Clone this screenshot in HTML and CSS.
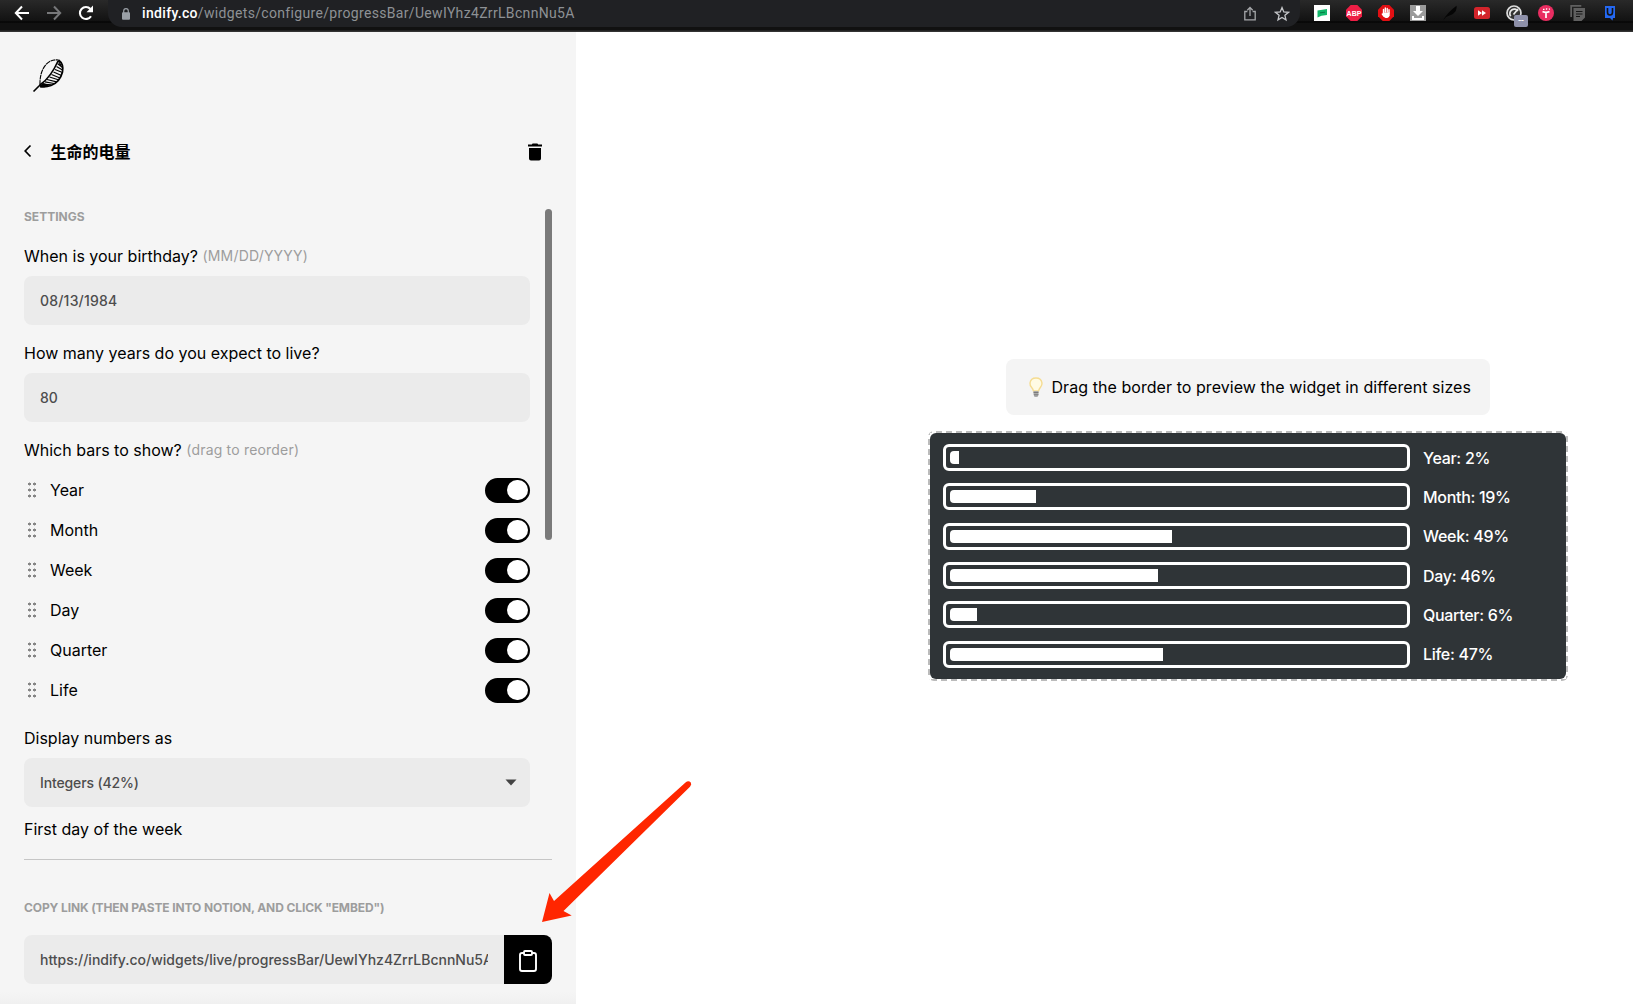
FILE: index.html
```html
<!DOCTYPE html>
<html lang="en">
<head>
<meta charset="utf-8">
<title>indify</title>
<link rel="stylesheet" href="styles.css">
</head>
<body>
<header class="toolbar">
  <nav class="nav">
    <svg width="16" height="16" viewBox="0 0 16 16" fill="none" stroke="#fff" stroke-width="2"><path d="M15 8H2M8 1.500L1.800 8L8 14.500"/></svg>
    <svg width="16" height="16" viewBox="0 0 16 16" fill="none" stroke="#77787a" stroke-width="2"><path d="M1 8h13M8 1.500L14.200 8L8 14.500"/></svg>
    <svg width="16" height="16" viewBox="0 0 16 16"><path d="M13 11.200A6 6 0 1 1 12.400 4" fill="none" stroke="#fff" stroke-width="2.100"/><path d="M15 .500v6.800H8.500z" fill="#fff"/></svg>
  </nav>
  <div class="address">
    <svg class="lock" width="10" height="12" viewBox="0 0 10 12"><rect x="1" y="4.300" width="8" height="7.400" rx="1" fill="#9aa0a6"/><path d="M2.700 5V3a2.300 2.300 0 0 1 4.600 0v2" fill="none" stroke="#9aa0a6" stroke-width="1.200"/></svg>
    <span class="url"><b>indify.co</b>/widgets/configure/progressBar/UewIYhz4ZrrLBcnnNu5A</span>
    <svg class="share" width="14" height="16" viewBox="0 0 14 16" fill="none" stroke="#a5a7aa" stroke-width="1.300"><path d="M4.400 5.500H1.800v8.400h10.400V5.500H9.600M7 10V1.600M4.300 4.200L7 1.500l2.700 2.700"/></svg>
    <svg class="star" width="16" height="16" viewBox="0 0 16 16" fill="none" stroke="#c4c6c9" stroke-width="1.300"><path d="M8 1.600l1.800 4.300 4.700.4-3.600 3 1.100 4.600L8 11.500l-4 2.400 1.100-4.600-3.600-3 4.700-.4z"/></svg>
  </div>
  <div class="extensions">
    <svg width="16" height="16" viewBox="0 0 16 16"><path fill="#fff" d="M0 0h16v16H0z"/><path fill="#12b76a" d="M3.500 5.500L13 4v6l-5.500.8-4 1.600z"/><path stroke="#087a45" d="M6 7.800l5-.6"/></svg>
    <svg width="16" height="16" viewBox="0 0 16 16"><path fill="#ed1e45" d="M4.700 0h6.600L16 4.700v6.600L11.300 16H4.700L0 11.300V4.700z"/><text class="abp" x="8" y="10.500" text-anchor="middle">ABP</text></svg>
    <svg width="16" height="16" viewBox="0 0 16 16"><path fill="#e20f13" d="M4.700 0h6.600L16 4.700v6.600L11.300 16H4.700L0 11.300V4.700z"/><path d="M5.500 8V4.500M7.300 7V3M9.200 7V3.400M11 8V4.800M4.300 9l1.500 2" stroke="#fff" stroke-width="1.400" stroke-linecap="round"/><path d="M4.900 7.500h6.800v2.800q-.5 2.700-2.400 2.700H7.500q-1.500 0-2.600-3z" fill="#fff"/></svg>
    <svg width="16" height="16" viewBox="0 0 16 16"><path fill="#9b9b9b" d="M0 0h16v16H0z"/><path fill="#fff" d="M6 1h4v5h3l-5 5-5-5h3zM2 11h2v2h8v-2h2v4H2z"/></svg>
    <svg width="16" height="16" viewBox="0 0 16 16"><path d="M1 15.500Q5 8 14.500.8 15.500 6 10 9.500L4 12z" fill="#050505"/></svg>
    <svg width="16" height="16" viewBox="0 0 16 16"><rect y="2" width="16" height="12" rx="2.500" fill="#d3242b"/><path d="M4 5.300L8 8l-4 2.700zM8 5.300L12 8l-4 2.700z" fill="#fff"/></svg>
    <span class="gauge">
      <svg width="16" height="16" viewBox="0 0 16 16"><circle cx="8" cy="8" r="7" fill="#333" stroke="#ddd" stroke-width="1.700"/><path d="M4.700 11.300A4.500 4.500 0 1 1 12 6M7.500 9.500L12 4" fill="none" stroke="#e8e8e8" stroke-width="1.700"/></svg>
      <span class="badge">--</span>
    </span>
    <svg width="16" height="16" viewBox="0 0 16 16"><circle cx="8" cy="8" r="8" fill="#e92d61"/><path d="M8 13V7.500M4.500 6.500q3.500 1.800 7 0" fill="none" stroke="#fff" stroke-width="1.700"/><path d="M5 4.300h1.500M8 4.500l1.200-1M11 4.500l.7-.8" stroke="#fff" stroke-width="1.200"/></svg>
    <svg width="16" height="16" viewBox="0 0 16 16"><path d="M.300 0h11v1.700H2V12H.300zM3.500 3H15v9.500L11.500 16h-8z" fill="#606060"/><path d="M6 6.500h6.500M6 9h6.500M6 11.500h4" stroke="#161616" stroke-width="1.200"/></svg>
    <svg width="16" height="16" viewBox="0 0 16 16"><path fill="#2468f2" d="M3 1h10v12h-2l-.5 2.500L8 13H3z"/><path d="M5.500 3v4.300q0 2.700 2.500 2.700t2.500-2.700V3" fill="none" stroke="#131313" stroke-width="1.600"/></svg>
  </div>
</header>
<main class="page">
  <aside class="sidebar">
    <svg class="logo" width="34" height="36" viewBox="0 0 34 36"><path d="M1.500 33.500Q6 29 8.500 26.500 19 19 26 3" fill="none" stroke="#000" stroke-width="1.600"/><path d="M8 27.500Q7.500 14 14 6.500 19 1 26.500 2" fill="none" stroke="#000" stroke-width="1.100" stroke-dasharray="5 .6"/><path d="M26.500 2Q32 6 30.500 14 28 24 19 27.500q-5 2-11 1.200" fill="none" stroke="#000" stroke-width="1.700"/><path d="M26 2.500l3 5M25.500 5.500l5 4M24.500 8.500l6 3.500M23 11.500l7.500 3M21.500 14l8 3.500M19.500 16.500L28 20M17.500 19L27 22M15 21.500l9.500 2.300M13 23.800l9 1.700M10 26l9.500.8" stroke="#000" stroke-width="1.250"/><path d="M7 28l4.500-3 6 2.200-5 2z"/></svg>
    <div class="heading">
      <svg class="back" width="8" height="14" viewBox="0 0 8 14" fill="none" stroke="#000" stroke-width="1.700"><path d="M6.500 1.500L1.200 7l5.300 5.500"/></svg>
      <h1>生命的电量</h1>
      <svg class="trash" width="14" height="18" viewBox="0 0 14 18"><path d="M0 1.600h3.800L4.600.6h4.800l.8 1H14v1.900H0zM1 5h12v10.400q0 2-2 2H3q-2 0-2-2z"/></svg>
    </div>
    <div class="settings">
      <div class="fields">
        <h2>SETTINGS</h2>
        <label class="label">When is your birthday? <small>(MM/DD/YYYY)</small></label>
        <div class="input date">08/13/1984</div>
        <label class="label next">How many years do you expect to live?</label>
        <div class="input">80</div>
        <label class="label next">Which bars to show? <small>(drag to reorder)</small></label>
        <ul class="bars">
          <li><i class="grip"></i>Year<span class="toggle"></span></li>
          <li><i class="grip"></i>Month<span class="toggle"></span></li>
          <li><i class="grip"></i>Week<span class="toggle"></span></li>
          <li><i class="grip"></i>Day<span class="toggle"></span></li>
          <li><i class="grip"></i>Quarter<span class="toggle"></span></li>
          <li><i class="grip"></i>Life<span class="toggle"></span></li>
        </ul>
        <label class="label next">Display numbers as</label>
        <div class="input select">Integers (42%)<svg width="12" height="7" viewBox="0 0 12 7"><path d="M.500.500h11L6 6.500z" fill="#444"/></svg></div>
        <label class="label first">First day of the week</label>
      </div>
      <div class="scrollbar"></div>
    </div>
    <section class="copy">
      <h2>COPY LINK (THEN PASTE INTO NOTION, AND CLICK "EMBED")</h2>
      <div class="link">
        <div class="link-box"><div class="link-text">https://indify.co/widgets/live/progressBar/UewIYhz4ZrrLBcnnNu5A</div></div>
        <button class="copy-button"><svg width="20" height="24" viewBox="0 0 20 24" fill="none" stroke="#fff" stroke-width="1.900"><path d="M6 4H4Q2 4 2 6v14q0 2 2 2h12q2 0 2-2V6q0-2-2-2h-2"/><rect x="6" y="2" width="8" height="4" rx="1"/></svg></button>
      </div>
    </section>
  </aside>
  <section class="preview">
    <div class="tip"><svg width="14" height="21" viewBox="0 0 14 21"><path d="M4.500 14Q4 12 2.500 10.300.8 8.300 1 6 1.700 1 7 1t6 5q.2 2.300-1.500 4.300Q10 12 9.500 14z" fill="#fffbe4" stroke="#f5dc91" stroke-width="1.400"/><path d="M4.500 14h5v3.500L8.500 20h-3l-1-2.500z" fill="#aaa"/><path d="M4.500 15.500h5M5 17.800h4.500" stroke="#666" stroke-width=".7"/></svg>Drag the border to preview the widget in different sizes</div>
    <div class="widget">
      <div class="rows">
        <div class="row"><div class="track"><div class="fill" style="width:2%"></div></div><span>Year: 2%</span></div>
        <div class="row"><div class="track"><div class="fill" style="width:19%"></div></div><span>Month: 19%</span></div>
        <div class="row"><div class="track"><div class="fill" style="width:49%"></div></div><span>Week: 49%</span></div>
        <div class="row"><div class="track"><div class="fill" style="width:46%"></div></div><span>Day: 46%</span></div>
        <div class="row"><div class="track"><div class="fill" style="width:6%"></div></div><span>Quarter: 6%</span></div>
        <div class="row"><div class="track"><div class="fill" style="width:47%"></div></div><span>Life: 47%</span></div>
      </div>
    </div>
  </section>
</main>
<svg class="pointer" width="152" height="144" viewBox="540 779 152 144"><path d="M542 922l7.500-29 4.500 8L685.500 782.500q3-2.500 5.300 0 1.200 1.800-.8 4.300L563.500 911l8.200 4.500z" fill="#ff2600"/></svg>
</body>
</html>
```
FILE: styles.css
```css
* { box-sizing: border-box; }
body { margin: 0; height: 1004px; overflow: hidden; background: #fff; color: #000; font: 16px/20px Inter, "Noto Sans CJK SC", sans-serif; }
h1, h2, ul { margin: 0; padding: 0; }
svg { display: block; flex: none; }

/* Browser toolbar */
.toolbar { height: 32px; display: flex; background: linear-gradient(#292929, #121212 21px, #000 22px, #111 23px, #111 30px, #333 31px); }
.nav { width: 108px; height: 27px; display: flex; gap: 16px; padding: 5px 0 0 14px; flex: none; }
.address { width: 1192px; height: 27px; display: flex; align-items: center; background: #202124; border-radius: 0 0 14px 14px; padding-left: 13px; flex: none; }
.url { margin-left: 11px; padding-bottom: 1px; font: 14px/20px Roboto, sans-serif; letter-spacing: .33px; color: #8e9195; flex: 1; white-space: nowrap; }
.url b { font-weight: 500; color: #fff; }
.share { margin-right: 17px; }
.star { margin-right: 10px; }
.extensions { display: flex; gap: 16px; padding: 5px 0 0 14px; }
.abp { font: 700 7px "Liberation Sans", sans-serif; fill: #fff; }
.gauge { position: relative; width: 16px; height: 16px; }
.badge { position: absolute; left: 8px; top: 10px; width: 14px; height: 12px; border-radius: 2px; background: #8e90a9; color: #fff; font: 10px/12px Roboto, sans-serif; text-align: center; }

/* Configuration sidebar */
.page { display: flex; height: 972px; }
.sidebar { width: 576px; flex: none; padding: 26px 24px 0; background: linear-gradient(#f5f5f5 960px, #f0f0f0 972px); display: flex; flex-direction: column; }
.logo { margin-left: 8px; }
.heading { height: 24px; margin-top: 46px; display: flex; align-items: center; }
.back { margin-bottom: 2px; }
.heading h1 { margin-left: 18.5px; font-size: 16px; font-weight: 700; line-height: 24px; }
.trash { margin-left: auto; margin-right: 10px; }
.settings { margin-top: 45px; height: 651px; display: flex; border-bottom: 1px solid #c6c6c6; }
.fields { width: 506px; }
h2 { font-size: 12px; line-height: 16px; font-weight: 700; color: #9d9d9d; white-space: nowrap; }
.settings h2 { margin-bottom: 21px; }
.scrollbar { width: 7px; height: 331px; margin-left: 15px; border-radius: 4px; background: #7a7a7a; }
.label { display: block; height: 20px; white-space: nowrap; }
.label small { color: #9d9d9d; font-size: 14px; line-height: 1; letter-spacing: .19px; vertical-align: 1px; }
.label.next { margin-top: 18px; }
.label.first { margin-top: 12px; }
.input { height: 49px; margin-top: 10px; padding: 0 16px; display: flex; align-items: center; border-radius: 8px; background: #ebebeb; color: #4d4d4d; font-size: 14px; font-weight: 500; }
.date { letter-spacing: .2px; }
.select { justify-content: space-between; padding-right: 13px; letter-spacing: -.14px; }
.bars { list-style: none; margin-top: 10px; }
.bars li { height: 40px; display: flex; align-items: center; }
.grip { width: 10px; height: 18px; margin: 0 13px 0 3px; background: radial-gradient(circle, #858585 1.3px, transparent 1.7px) 0 0 / 5px 6px; }
.toggle { width: 45px; height: 25px; margin-left: auto; padding: 2px 2px 0 22px; background: #000; border-radius: 13px; }
.toggle::before { content: ""; display: block; width: 20.5px; height: 20.5px; border-radius: 50%; background: #fff; }
.copy { padding-top: 40px; }
.copy h2 { letter-spacing: -.11px; }
.link { display: flex; height: 49px; margin-top: 19px; border-radius: 8px; overflow: hidden; background: #ebebeb; }
.link-box { width: 480px; padding: 0 16px; display: flex; align-items: center; }
.link-text { width: 448px; overflow: hidden; white-space: nowrap; color: #4d4d4d; font-size: 14px; font-weight: 500; }
.copy-button { width: 48px; border: 0; padding: 2px 0 0; background: #000; display: grid; place-items: center; }

/* Widget preview */
.preview { flex: 1; display: flex; flex-direction: column; align-items: center; padding: 327px 0 0 287px; }
.tip { width: 484px; height: 56px; margin-bottom: 16px; border-radius: 8px; background: #f4f4f4; display: flex; align-items: center; gap: 8.5px; padding-left: 23px; white-space: nowrap; letter-spacing: .06px; }
.widget { width: 640px; height: 250px; padding: 2px; border-radius: 6px; background:
  linear-gradient(90deg, #bbb 6px, transparent 6px) 8px 0 / 10px 2px repeat-x,
  linear-gradient(90deg, #bbb 6px, transparent 6px) 3px 100% / 10px 2px repeat-x,
  linear-gradient(#bbb 6px, transparent 6px) 0 8px / 2px 10px repeat-y,
  linear-gradient(#bbb 6px, transparent 6px) 100% 5px / 2px 10px repeat-y;
}
.rows { height: 246px; padding: 5px 13px; border-radius: 6px; background: #2f3437; display: grid; grid-template-rows: repeat(6, 1fr); }
.row { display: flex; align-items: center; gap: 13px; color: #fff; font-weight: 500; letter-spacing: -.3px; }
.track { width: 467px; height: 27px; border: 3px solid #fff; border-radius: 6px; padding: 4px; }
.fill { height: 13px; background: #fff; border-radius: 4px 0 0 4px; }
.pointer { position: absolute; left: 540px; top: 779px; }
```
